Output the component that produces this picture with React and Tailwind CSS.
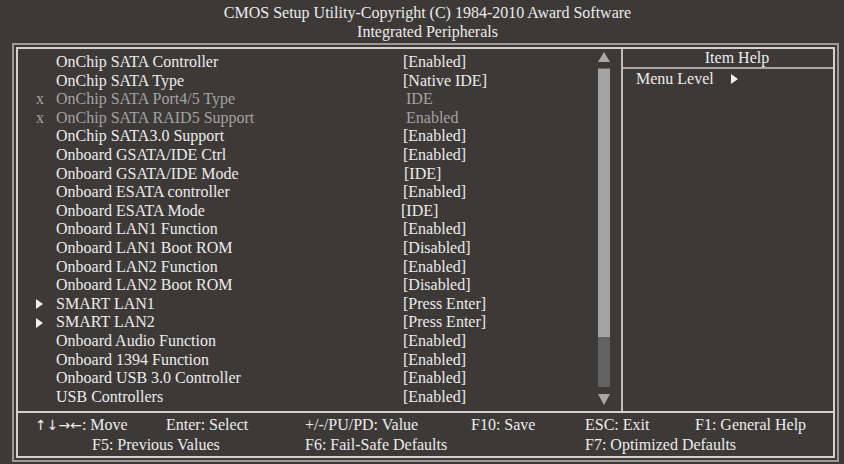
import React from 'react';

const rows = [
  { name: 'OnChip SATA Controller', value: '[Enabled]' },
  { name: 'OnChip SATA Type', value: '[Native IDE]' },
  { name: 'OnChip SATA Port4/5 Type', value: 'IDE', off: true },
  { name: 'OnChip SATA RAID5 Support', value: 'Enabled', off: true },
  { name: 'OnChip SATA3.0 Support', value: '[Enabled]' },
  { name: 'Onboard GSATA/IDE Ctrl', value: '[Enabled]' },
  { name: 'Onboard GSATA/IDE Mode', value: '[IDE]', shift: 'pl-[1px]' },
  { name: 'Onboard ESATA controller', value: '[Enabled]' },
  { name: 'Onboard ESATA Mode', value: '[IDE]', shift: '-ml-[2px]' },
  { name: 'Onboard LAN1 Function', value: '[Enabled]' },
  { name: 'Onboard LAN1 Boot ROM', value: '[Disabled]' },
  { name: 'Onboard LAN2 Function', value: '[Enabled]' },
  { name: 'Onboard LAN2 Boot ROM', value: '[Disabled]' },
  { name: 'SMART LAN1', value: '[Press Enter]', sub: true },
  { name: 'SMART LAN2', value: '[Press Enter]', sub: true },
  { name: 'Onboard Audio Function', value: '[Enabled]' },
  { name: 'Onboard 1394 Function', value: '[Enabled]' },
  { name: 'Onboard USB 3.0 Controller', value: '[Enabled]' },
  { name: 'USB Controllers', value: '[Enabled]' },
];

const Tri = ({ className = '' }) => (
  <svg width="7" height="10" viewBox="0 0 7 10" className={className}>
    <polygon points="0,0 7,5 0,10" fill="#f0f0f0" />
  </svg>
);

const SettingRow = ({ row }) => (
  <div className={`flex h-[18.6px] items-center leading-[18.6px] ${row.off ? 'text-[#a3a3a3]' : 'text-[#ececec]'}`}>
    <div className="flex w-[38px] items-center pl-[17px]">
      {row.off && <span className="pl-[1px]">x</span>}
      {row.sub && <Tri className="ml-[1px]" />}
    </div>
    <div className="w-[347px] whitespace-nowrap">{row.name}</div>
    <div className={`whitespace-nowrap ${row.off ? 'pl-[3px]' : ''} ${row.shift || ''}`}>{row.value}</div>
  </div>
);

const ScrollBar = () => (
  <div className="mr-[11px] flex w-[12px] flex-col items-center pt-[3px]">
    <svg width="12" height="10" viewBox="0 0 12 10">
      <polygon points="6,0 12,10 0,10" fill="#a8a8a8" />
    </svg>
    <div className="mt-[6px] flex h-[319px] w-[12px] flex-col">
      <div className="h-[269px] border-t border-[#6a6a6a] bg-[#a3a3a3]" />
      <div className="flex-1 bg-[#626262]" />
    </div>
    <svg width="12" height="11" viewBox="0 0 12 11" className="mt-[7px]">
      <polygon points="0,0 12,0 6,11" fill="#a8a8a8" />
    </svg>
  </div>
);

export default function App() {
  return (
    <div
      className="flex h-[464px] w-[844px] flex-col overflow-hidden bg-[#3c3937] text-[16px] text-[#ececec]"
      style={{ fontFamily: '"Liberation Serif", "Times New Roman", serif' }}
    >
      {/* title */}
      <div className="flex h-[43px] flex-col items-center pl-[11px] pt-[3px] leading-[19px]">
        <div>CMOS Setup Utility-Copyright (C) 1984-2010 Award Software</div>
        <div>Integrated Peripherals</div>
      </div>

      {/* double frame */}
      <div className="ml-[12px] mr-[5px] h-[419px] border-2 border-[#9a9a9a] p-[2px]">
        <div className="flex h-full flex-col border-2 border-[#d2d2d2]">
          <div className="flex h-[362px]">
            <div className="flex w-[603px]">
              <div className="flex-1 pt-[4px]">
                {rows.map((r) => (
                  <SettingRow key={r.name} row={r} />
                ))}
              </div>
              <ScrollBar />
            </div>
            <div className="w-[2px] bg-[#bcbcbc]" />
            <div className="flex-1">
              <div className="h-[18px] pl-[18px] text-center leading-[18px]">Item Help</div>
              <div className="h-[2px] bg-[#a8a8a8]" />
              <div className="flex items-center pl-[13px] pt-[1px] leading-[18px]">
                <span>Menu Level</span>
                <Tri className="ml-[17px]" />
              </div>
            </div>
          </div>
          <div className="h-[2px] bg-[#d2d2d2]" />
          <div className="pl-[17px] pt-[2px] leading-[19px] text-[#ececec]">
            <div className="flex whitespace-nowrap">
              <div className="w-[131px]">
                <span className="text-[14px]" style={{ fontFamily: '"DejaVu Sans", sans-serif' }}>↑↓→←</span>: Move
              </div>
              <div className="w-[139px]">Enter: Select</div>
              <div className="w-[166px]">+/-/PU/PD: Value</div>
              <div className="w-[114px]">F10: Save</div>
              <div className="w-[110px]">ESC: Exit</div>
              <div>F1: General Help</div>
            </div>
            <div className="flex whitespace-nowrap">
              <div className="w-[270px] pl-[57px]">F5: Previous Values</div>
              <div className="w-[280px]">F6: Fail-Safe Defaults</div>
              <div>F7: Optimized Defaults</div>
            </div>
          </div>
        </div>
      </div>
    </div>
  );
}
